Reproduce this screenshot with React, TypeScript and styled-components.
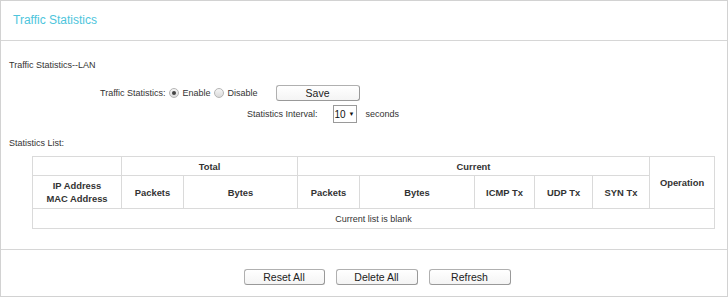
import React from "react";
import styled, { createGlobalStyle } from "styled-components";

const Global = createGlobalStyle`
  html, body { margin: 0; padding: 0; background: #fff; }
  body { font-family: "Liberation Sans", Arial, sans-serif; font-size: 9px; color: #333; }
`;

const Panel = styled.div`
  width: 728px;
  height: 297px;
  box-sizing: border-box;
  border: 1px solid #d2d2d2;
  display: flex;
  flex-direction: column;
`;

const Header = styled.div`
  height: 40px;
  box-sizing: border-box;
  border-bottom: 1px solid #d6d6d6;
  padding-left: 12px;
  display: flex;
  align-items: center;
`;

const Title = styled.h1`
  margin: 0;
  font-size: 12px;
  font-weight: normal;
  color: #4ec5dc;
  margin-top: -2px;
`;

const Body = styled.div`
  height: 209px;
  box-sizing: border-box;
  border-bottom: 1px solid #d6d6d6;
  padding: 17px 0 0 8px;
`;

const SectionLabel = styled.div<{ $mt?: number }>`
  height: 14px;
  line-height: 14px;
  margin-top: ${(p) => p.$mt ?? 0}px;
`;

const FormRow = styled.div<{ $mt: number; $pl: number }>`
  display: flex;
  align-items: center;
  height: 16px;
  margin-top: ${(p) => p.$mt}px;
  padding-left: ${(p) => p.$pl}px;
`;

const Label = styled.span`
  white-space: nowrap;
`;

const RadioLabel = styled.label`
  display: inline-flex;
  align-items: center;
  gap: 4px;
  margin-left: 3px;
`;

const Radio = styled.span<{ $on?: boolean }>`
  width: 8px;
  height: 8px;
  border-radius: 50%;
  border: 1px solid #b5b5b5;
  background: linear-gradient(#f6f6f6, #dadada);
  display: inline-flex;
  align-items: center;
  justify-content: center;
  &::after {
    content: "";
    width: 4px;
    height: 4px;
    border-radius: 50%;
    background: ${(p) => (p.$on ? "#444" : "transparent")};
  }
`;

const Button = styled.button<{ $w: number }>`
  width: ${(p) => p.$w}px;
  height: 16px;
  box-sizing: border-box;
  border: 1px solid #b0b0b0;
  border-right-color: #999;
  border-bottom-color: #999;
  border-radius: 3px;
  background: linear-gradient(#ffffff, #f4f4f4);
  font-family: "Liberation Sans", Arial, sans-serif;
  font-size: 10.5px;
  color: #222;
  padding: 0;
  line-height: 14px;
  cursor: pointer;
`;

const Spacer = styled.span<{ $w: number }>`
  display: inline-block;
  width: ${(p) => p.$w}px;
`;

const Select = styled.div`
  width: 24px;
  height: 18px;
  box-sizing: border-box;
  border: 1px solid #9a9a9a;
  display: flex;
  align-items: center;
  justify-content: center;
  gap: 3px;
  font-size: 10px;
  color: #111;
  margin-left: 15px;
  margin-right: 9px;
`;

const Arrow = styled.span`
  font-size: 6px;
`;

const Table = styled.table`
  margin: 6px 0 0 23px;
  border-collapse: collapse;
  width: 682px;
  table-layout: fixed;
  font-size: 9px;
  color: #333;
`;

const Th = styled.th<{ $h?: number }>`
  border: 1px solid #dadada;
  font-weight: bold;
  font-size: 9.4px;
  text-align: center;
  padding: 0;
  height: ${(p) => p.$h ?? 18}px;
  line-height: 13px;
`;

const Td = styled.td`
  border: 1px solid #dadada;
  text-align: center;
  height: 19px;
  padding: 0;
`;

const Footer = styled.div`
  flex: 1;
  display: flex;
  justify-content: center;
  align-items: flex-start;
  padding-top: 19px;
  gap: 11px;
  padding-left: 26px;
`;

const cols = [89, 62, 114, 62, 115, 60, 58, 57, 65];

export default function App() {
  return (
    <>
      <Global />
      <Panel>
        <Header>
          <Title>Traffic Statistics</Title>
        </Header>
        <Body>
          <SectionLabel>Traffic Statistics--LAN</SectionLabel>
          <FormRow $mt={13} $pl={91}>
            <Label>Traffic Statistics:</Label>
            <RadioLabel>
              <Radio $on />
              Enable
            </RadioLabel>
            <RadioLabel>
              <Radio />
              Disable
            </RadioLabel>
            <Spacer $w={18} />
            <Button $w={84}>Save</Button>
          </FormRow>
          <FormRow $mt={5} $pl={238}>
            <Label>Statistics Interval:</Label>
            <Select>
              10 <Arrow>▼</Arrow>
            </Select>
            <Label>seconds</Label>
          </FormRow>
          <SectionLabel $mt={14}>Statistics List:</SectionLabel>
          <Table>
            <colgroup>
              {cols.map((w, i) => (
                <col key={i} style={{ width: w }} />
              ))}
            </colgroup>
            <thead>
              <tr>
                <Th></Th>
                <Th colSpan={2}>Total</Th>
                <Th colSpan={5}>Current</Th>
                <Th rowSpan={2}>Operation</Th>
              </tr>
              <tr>
                <Th $h={32}>
                  IP Address
                  <br />
                  MAC Address
                </Th>
                <Th $h={32}>Packets</Th>
                <Th $h={32}>Bytes</Th>
                <Th $h={32}>Packets</Th>
                <Th $h={32}>Bytes</Th>
                <Th $h={32}>ICMP Tx</Th>
                <Th $h={32}>UDP Tx</Th>
                <Th $h={32}>SYN Tx</Th>
              </tr>
            </thead>
            <tbody>
              <tr>
                <Td colSpan={9}>Current list is blank</Td>
              </tr>
            </tbody>
          </Table>
        </Body>
        <Footer>
          <Button $w={81}>Reset All</Button>
          <Button $w={82}>Delete All</Button>
          <Button $w={82}>Refresh</Button>
        </Footer>
      </Panel>
    </>
  );
}
